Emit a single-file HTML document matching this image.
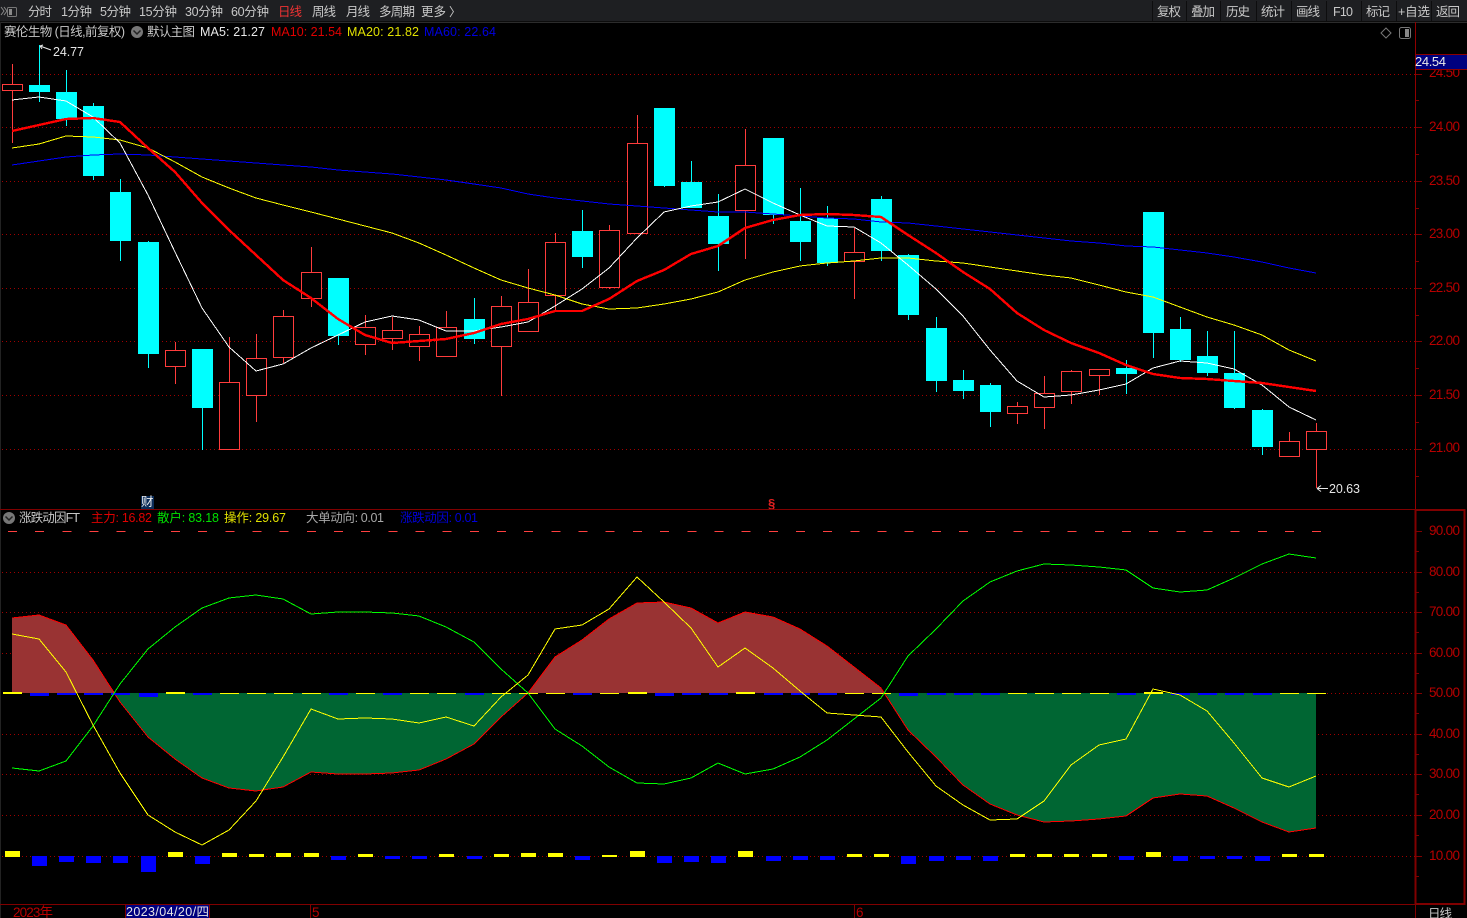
<!DOCTYPE html>
<html lang="zh">
<head>
<meta charset="utf-8">
<title>赛伦生物</title>
<style>
html,body{margin:0;padding:0;background:#000;width:1467px;height:918px;overflow:hidden}
svg{display:block;position:absolute;left:0;top:0}
text{font-family:"Liberation Sans","Noto Sans CJK SC",sans-serif;font-size:12.5px}
.t{fill:#c8c8c8}
.ax{fill:#b80000;font-size:13.5px}
.l{fill:none;stroke-width:1;shape-rendering:crispEdges}
.g{stroke:#a00000;stroke-width:1;stroke-dasharray:1 3;fill:none;shape-rendering:crispEdges}
.c{shape-rendering:crispEdges}
</style>
</head>
<body>
<svg width="1467" height="918" viewBox="0 0 1467 918" xmlns="http://www.w3.org/2000/svg">
<rect width="1467" height="918" fill="#000"/>
<!-- toolbar -->
<rect x="0" y="0" width="1467" height="21" fill="#1e1f22"/>
<rect x="0" y="21" width="1467" height="1" fill="#0c0c0c"/>
<rect x="0" y="22" width="1467" height="1" fill="#2c2c2c"/>
<rect x="0" y="22" width="1" height="896" fill="#222"/>
<g class="c" fill="#0d0d0e">
<rect x="1152" y="1" width="1" height="20"/><rect x="1186" y="1" width="1" height="20"/><rect x="1220" y="1" width="1" height="20"/><rect x="1256" y="1" width="1" height="20"/><rect x="1291" y="1" width="1" height="20"/><rect x="1326" y="1" width="1" height="20"/><rect x="1361" y="1" width="1" height="20"/><rect x="1396" y="1" width="1" height="20"/><rect x="1431" y="1" width="1" height="20"/>
</g>
<path d="M1 7l3 4-3 4M4 7l3 4-3 4" fill="none" stroke="#8a8a8a" stroke-width="1"/>
<rect x="7.5" y="7.5" width="9" height="9" rx="1" fill="none" stroke="#777"/>
<rect x="9" y="9" width="3" height="6" fill="#8a8a8a"/>
<g class="t">
<text x="28" y="16" textLength="24">分时</text>
<text x="61" y="16" textLength="31">1分钟</text>
<text x="100" y="16" textLength="31">5分钟</text>
<text x="139" y="16" textLength="38">15分钟</text>
<text x="185" y="16" textLength="38">30分钟</text>
<text x="231" y="16" textLength="38">60分钟</text>
<text x="278" y="16" textLength="24" style="fill:#f03333">日线</text>
<text x="312" y="16" textLength="24">周线</text>
<text x="346" y="16" textLength="24">月线</text>
<text x="379" y="16" textLength="36">多周期</text>
<text x="421" y="16" textLength="25">更多</text>
<text x="449" y="16" style="font-size:12px">〉</text>
<text x="1157" y="16" textLength="24">复权</text>
<text x="1191" y="16" textLength="24">叠加</text>
<text x="1226" y="16" textLength="24">历史</text>
<text x="1261" y="16" textLength="24">统计</text>
<text x="1296" y="16" textLength="24">画线</text>
<text x="1333" y="16" textLength="20">F10</text>
<text x="1366" y="16" textLength="24">标记</text>
<text x="1398" y="16" textLength="32">+自选</text>
<text x="1436" y="16" textLength="24">返回</text>
</g>

<!-- pane 1 grid -->
<g class="g">
<path d="M2 74.5H1415M2 127.5H1415M2 181.5H1415M2 234.5H1415M2 288.5H1415M2 341.5H1415M2 395.5H1415M2 449.5H1415"/>
</g>

<!-- candles -->
<path class="c" fill="none" stroke="#00ffff" d="M39.5 45V102M66.5 70V126M93.5 103V180M120.5 179V261M148.5 241V368M202.5 349V450M338.5 278V345M474.5 298V344M582.5 210V268M664.5 108V187M691.5 161V208M718.5 194V271M773.5 138V224M800.5 188V261M827.5 206V266M881.5 196V261M908.5 254V320M936.5 317V392M963.5 370V399M990.5 383V427M1126.5 360V394M1153.5 212V358M1180.5 317V362M1207.5 331V376M1234.5 331V409M1262.5 409V455"/>
<path class="c" fill="#00ffff" d="M29 85h21v7h-21zM56 92h21v27h-21zM83 106h21v70h-21zM110 192h21v49h-21zM138 242h21v112h-21zM192 349h21v59h-21zM328 278h21v58h-21zM464 319h21v20h-21zM572 231h21v26h-21zM654 108h21v78h-21zM681 182h21v26h-21zM708 216h21v28h-21zM763 138h21v77h-21zM790 221h21v21h-21zM817 218h21v45h-21zM871 199h21v52h-21zM898 255h21v60h-21zM926 328h21v53h-21zM953 380h21v11h-21zM980 385h21v27h-21zM1116 368h21v6h-21zM1143 212h21v121h-21zM1170 329h21v31h-21zM1197 356h21v17h-21zM1224 373h21v35h-21zM1252 410h21v37h-21z"/>
<path class="c" fill="none" stroke="#ff3c3c" d="M12.5 64V143M175.5 342V384M229.5 337V450M256.5 334V422M283.5 310V363M311.5 247V307M365.5 315V355M392.5 317V350M419.5 326V361M446.5 311V357M501.5 296V396M528.5 269V332M555.5 233V310M609.5 225V289M637.5 115V233M745.5 129V259M854.5 228V299M1017.5 402V424M1044.5 376V429M1071.5 370V404M1099.5 369V395M1289.5 432V457M1316.5 423V488"/>
<path class="c" fill="#000" stroke="#ff3c3c" d="M2.5 84.5h20v6h-20zM165.5 350.5h20v16h-20zM219.5 382.5h20v67h-20zM246.5 358.5h20v37h-20zM273.5 316.5h20v41h-20zM301.5 272.5h20v26h-20zM355.5 327.5h20v17h-20zM382.5 330.5h20v8h-20zM409.5 334.5h20v12h-20zM436.5 327.5h20v29h-20zM491.5 306.5h20v40h-20zM518.5 302.5h20v29h-20zM545.5 242.5h20v53h-20zM599.5 230.5h20v57h-20zM627.5 143.5h20v90h-20zM735.5 165.5h20v45h-20zM844.5 252.5h20v9h-20zM1007.5 406.5h20v7h-20zM1034.5 393.5h20v14h-20zM1061.5 371.5h20v20h-20zM1089.5 369.5h20v6h-20zM1279.5 441.5h20v15h-20zM1306.5 431.5h20v18h-20z"/>

<!-- MA lines -->
<polyline class="l" stroke="#0000ff" points="12,165 39,161 66,157 93,155 120,154 148,155 175,157 202,159 229,161 256,163 283,165 311,167 338,170 365,172 392,174 419,177 446,180 474,184 501,188 528,194 555,198 582,201 609,204 637,206 664,208 691,210 718,212 745,212 773,214 800,216 827,218 854,219 881,222 908,223 936,226 963,229 990,232 1017,235 1044,238 1071,241 1099,243 1126,246 1153,247 1180,250 1207,253 1234,257 1262,262 1289,268 1316,273"/>
<polyline class="l" stroke="#ffff00" points="12,148 39,144 66,136 93,137 120,140 148,148 175,162 202,177 229,188 256,198 283,205 311,212 338,219 365,226 392,233 419,243 446,255 474,268 501,280 528,288 555,295 582,304 609,309 637,308 664,304 691,299 718,292 745,280 773,272 800,266 827,263 854,261 881,258 908,258 936,261 963,263 990,267 1017,271 1044,275 1071,278 1099,285 1126,292 1153,297 1180,307 1207,317 1234,325 1262,335 1289,350 1316,361"/>
<polyline class="l" stroke="#ffffff" points="12,100 39,97 66,101 93,117 120,143 148,195 175,252 202,308 229,347 256,371 283,364 311,348 338,335 365,322 392,316 419,320 446,331 474,331 501,327 528,322 555,306 582,289 609,268 637,238 664,212 691,206 718,202 745,189 773,203 800,215 827,226 854,227 881,243 908,265 936,289 963,316 990,350 1017,381 1044,397 1071,395 1099,390 1126,384 1153,368 1180,361 1207,363 1234,369 1262,385 1289,407 1316,420"/>
<polyline fill="none" stroke="#ff0000" stroke-width="2.4" class="c" points="12,131 39,125 66,119 93,118 120,122 148,148 175,172 202,203 229,230 256,255 283,280 311,298 338,319 365,335 392,343 419,341 446,339 474,333 501,324 528,319 555,311 582,311 609,299 637,281 664,270 691,254 718,246 745,228 773,220 800,215 827,214 854,215 881,217 908,235 936,253 963,272 990,289 1017,313 1044,330 1071,343 1099,353 1126,365 1153,374 1180,378 1207,379 1234,381 1262,383 1289,387 1316,391"/>

<!-- high / low labels -->
<path d="M40 46l11 4M40 46l3-1M40 46l2 3" fill="none" stroke="#e8e8e8" stroke-width="1"/>
<text x="53" y="56" textLength="31" style="fill:#e6e6e6">24.77</text>
<path d="M1317 488.5h11M1317 488.5l4-3M1317 488.5l4 3" fill="none" stroke="#e8e8e8" stroke-width="1"/>
<text x="1329" y="493" textLength="31" style="fill:#e6e6e6">20.63</text>

<!-- header line -->
<text x="4" y="36" textLength="121" class="t">赛伦生物 (日线,前复权)</text>
<circle cx="137" cy="32" r="6" fill="#777"/>
<path d="M133.5 30.5l3.5 3.5 3.5-3.5" fill="none" stroke="#222" stroke-width="1.5"/>
<text x="147" y="36" textLength="48" class="t">默认主图</text>
<text x="200" y="36" textLength="65" style="fill:#e8e8e8">MA5: 21.27</text>
<text x="271" y="36" textLength="71" style="fill:#e00000">MA10: 21.54</text>
<text x="347" y="36" textLength="72" style="fill:#e0e000">MA20: 21.82</text>
<text x="424" y="36" textLength="72" style="fill:#0000e0">MA60: 22.64</text>
<path d="M1386 28l5 5-5 5-5-5z" fill="none" stroke="#777"/>
<rect x="1399.5" y="27.5" width="11" height="11" rx="2" fill="none" stroke="#777"/>
<rect x="1405" y="29" width="4" height="8" fill="#888"/>

<!-- markers -->
<rect x="141" y="496" width="13" height="13" fill="#0b2c58"/>
<text x="141" y="506" style="font-size:12.5px;fill:#eee">财</text>
<text x="768" y="508" style="font-size:13px;font-weight:bold;fill:#e02020">§</text>

<!-- pane separators -->
<rect x="0" y="509" width="1415" height="1" fill="#800000"/>
<rect x="0" y="904" width="1415" height="1" fill="#800000"/>
<rect x="1415" y="22" width="1" height="488" fill="#900000"/>
<rect x="1415.5" y="510" width="49" height="394" fill="none" stroke="#800000" stroke-width="2"/>
<rect x="1415" y="904" width="1" height="14" fill="#800000"/>

<!-- right axis pane 1 -->
<path class="c" fill="none" stroke="#800000" d="M1416 74.5h6M1416 127.5h6M1416 181.5h6M1416 234.5h6M1416 288.5h6M1416 341.5h6M1416 395.5h6M1416 449.5h6M1416 100.5h3M1416 154.5h3M1416 208.5h3M1416 261.5h3M1416 315.5h3M1416 368.5h3M1416 422.5h3M1416 476.5h3"/>
<text class="ax" x="1429" y="77" textLength="31">24.50</text>
<text class="ax" x="1429" y="131" textLength="31">24.00</text>
<text class="ax" x="1429" y="185" textLength="31">23.50</text>
<text class="ax" x="1429" y="238" textLength="31">23.00</text>
<text class="ax" x="1429" y="292" textLength="31">22.50</text>
<text class="ax" x="1429" y="345" textLength="31">22.00</text>
<text class="ax" x="1429" y="399" textLength="31">21.50</text>
<text class="ax" x="1429" y="452" textLength="31">21.00</text>
<rect x="1415.5" y="54.5" width="52" height="15" fill="#00007f" stroke="#8c0000"/>
<text x="1415" y="66" textLength="31" style="font-size:13px;fill:#eaeaea">24.54</text>

<!-- pane 2 header -->
<circle cx="9" cy="518" r="6" fill="#777"/>
<path d="M5.5 516.5l3.5 3.5 3.5-3.5" fill="none" stroke="#222" stroke-width="1.5"/>
<text x="19" y="522" textLength="61" class="t">涨跌动因FT</text>
<text x="91" y="522" textLength="61" style="fill:#e00000">主力: 16.82</text>
<text x="157" y="522" textLength="62" style="fill:#00e000">散户: 83.18</text>
<text x="224" y="522" textLength="62" style="fill:#e0e000">操作: 29.67</text>
<text x="306" y="522" textLength="78" style="fill:#a8a8a8">大单动向: 0.01</text>
<text x="400" y="522" textLength="78" style="fill:#0000d8">涨跌动因: 0.01</text>

<!-- pane 2 grid -->
<path class="c" fill="none" stroke="#ff4040" stroke-dasharray="9 18.17" d="M8 531.5H1325"/>
<path class="g" d="M2 572.5H1415M2 612.5H1415M2 653.5H1415M1327 693.5H1415M2 734.5H1415M2 774.5H1415M2 815.5H1415M2 856.5H1415"/>

<!-- areas -->
<polygon class="c" fill="#993333" points="12,693 12,618 39,615 66,625 93,660 115,693"/>
<polygon class="c" fill="#006633" points="115,693 120,702 148,737 175,759 202,778 229,788 256,791 283,787 311,772 338,774 365,774 392,773 419,770 446,759 474,744 501,717 528,693"/>
<polygon class="c" fill="#993333" points="528,693 555,657 582,640 609,619 637,603 664,602 691,608 718,623 745,612 773,617 800,629 827,646 854,667 881,688 885,693"/>
<polygon class="c" fill="#006633" points="885,693 908,730 936,757 963,785 990,804 1017,815 1044,822 1071,821 1099,819 1126,816 1153,798 1180,794 1207,796 1234,808 1262,822 1289,832 1316,828 1316,693"/>

<!-- pane 2 lines -->
<polyline class="l" stroke="#ff0000" points="12,618 39,615 66,625 93,660 120,702 148,737 175,759 202,778 229,788 256,791 283,787 311,772 338,774 365,774 392,773 419,770 446,759 474,744 501,717 528,693 555,657 582,640 609,619 637,603 664,602 691,608 718,623 745,612 773,617 800,629 827,646 854,667 881,688 908,730 936,757 963,785 990,804 1017,815 1044,822 1071,821 1099,819 1126,816 1153,798 1180,794 1207,796 1234,808 1262,822 1289,832 1316,828"/>
<rect x="12" y="618" width="1" height="75" fill="#993333"/>

<!-- zero-line dashes -->
<g class="c" fill="#ffff00">
<rect x="3" y="692" width="19" height="2"/><rect x="166" y="692" width="19" height="2"/><rect x="220" y="693" width="19" height="1"/><rect x="247" y="693" width="19" height="1"/><rect x="274" y="693" width="19" height="1"/><rect x="302" y="693" width="19" height="1"/><rect x="356" y="693" width="19" height="1"/><rect x="410" y="693" width="19" height="1"/><rect x="437" y="693" width="19" height="1"/>
<rect x="492" y="693" width="19" height="1"/><rect x="546" y="693" width="19" height="1"/><rect x="600" y="693" width="19" height="1"/><rect x="628" y="692" width="19" height="2"/><rect x="736" y="692" width="19" height="2"/><rect x="845" y="693" width="19" height="1"/><rect x="1008" y="693" width="19" height="1"/><rect x="1035" y="693" width="19" height="1"/><rect x="1062" y="693" width="19" height="1"/><rect x="1090" y="693" width="19" height="1"/><rect x="1144" y="692" width="19" height="2"/><rect x="1280" y="693" width="19" height="1"/><rect x="1307" y="693" width="19" height="1"/>
<rect x="519" y="693" width="19" height="1"/><rect x="872" y="693" width="19" height="1"/>
</g>
<g class="c" fill="#0000ff">
<rect x="30" y="693" width="19" height="3"/><rect x="57" y="693" width="19" height="2"/><rect x="84" y="693" width="19" height="2"/><rect x="111" y="693" width="19" height="2"/><rect x="139" y="693" width="19" height="4"/><rect x="193" y="693" width="19" height="2"/><rect x="329" y="693" width="19" height="2"/><rect x="383" y="693" width="19" height="2"/>
<rect x="465" y="693" width="19" height="2"/><rect x="573" y="693" width="19" height="2"/><rect x="655" y="693" width="19" height="3"/><rect x="682" y="693" width="19" height="2"/><rect x="709" y="693" width="19" height="2"/><rect x="764" y="693" width="19" height="2"/><rect x="791" y="693" width="19" height="2"/><rect x="818" y="693" width="19" height="2"/><rect x="899" y="693" width="19" height="3"/><rect x="927" y="693" width="19" height="2"/><rect x="954" y="693" width="19" height="2"/><rect x="981" y="693" width="19" height="2"/><rect x="1117" y="693" width="19" height="2"/><rect x="1171" y="693" width="19" height="2"/><rect x="1198" y="693" width="19" height="2"/><rect x="1225" y="693" width="19" height="2"/><rect x="1253" y="693" width="19" height="2"/>
</g>

<polyline class="l" stroke="#00ff00" points="12,768 39,771 66,761 93,726 120,684 148,649 175,627 202,608 229,598 256,595 283,599 311,614 338,612 365,612 392,613 419,616 446,627 474,642 501,669 528,693 555,729 582,746 609,767 637,783 664,784 691,778 718,763 745,774 773,769 800,757 827,740 854,719 881,698 908,656 936,629 963,601 990,582 1017,571 1044,564 1071,565 1099,567 1126,570 1153,588 1180,592 1207,590 1234,578 1262,564 1289,554 1316,558"/>
<polyline class="l" stroke="#ffff00" points="12,634 39,639 66,672 93,725 120,773 148,815 175,832 202,845 229,830 256,801 283,757 311,709 338,719 365,718 392,719 419,723 446,717 474,726 501,697 528,675 555,629 582,625 609,609 637,577 664,602 691,628 718,667 745,648 773,668 800,691 827,713 854,715 881,717 908,752 936,786 963,805 990,820 1017,819 1044,801 1071,765 1099,745 1126,739 1153,689 1180,695 1207,711 1234,743 1262,778 1289,787 1316,776"/>

<!-- bottom bars -->
<g class="c" fill="#ffff00">
<rect x="5" y="851" width="15" height="6"/><rect x="168" y="852" width="15" height="5"/><rect x="222" y="853" width="15" height="4"/><rect x="249" y="854" width="15" height="3"/><rect x="276" y="853" width="15" height="4"/><rect x="304" y="853" width="15" height="4"/><rect x="358" y="854" width="15" height="3"/><rect x="439" y="854" width="15" height="3"/><rect x="494" y="854" width="15" height="3"/><rect x="521" y="853" width="15" height="4"/><rect x="548" y="853" width="15" height="4"/><rect x="602" y="855" width="15" height="2"/><rect x="630" y="851" width="15" height="6"/><rect x="738" y="851" width="15" height="6"/><rect x="847" y="854" width="15" height="3"/><rect x="874" y="854" width="15" height="3"/><rect x="1010" y="854" width="15" height="3"/><rect x="1037" y="854" width="15" height="3"/><rect x="1064" y="854" width="15" height="3"/><rect x="1092" y="854" width="15" height="3"/><rect x="1146" y="852" width="15" height="5"/><rect x="1282" y="854" width="15" height="3"/><rect x="1309" y="854" width="15" height="3"/>
</g>
<g class="c" fill="#0000ff">
<rect x="32" y="856" width="15" height="10"/><rect x="59" y="856" width="15" height="6"/><rect x="86" y="856" width="15" height="7"/><rect x="113" y="856" width="15" height="7"/><rect x="141" y="856" width="15" height="16"/><rect x="195" y="856" width="15" height="8"/><rect x="331" y="856" width="15" height="4"/><rect x="385" y="856" width="15" height="3"/><rect x="412" y="856" width="15" height="3"/><rect x="467" y="856" width="15" height="3"/><rect x="575" y="856" width="15" height="4"/><rect x="657" y="856" width="15" height="7"/><rect x="684" y="856" width="15" height="6"/><rect x="711" y="856" width="15" height="7"/><rect x="766" y="856" width="15" height="5"/><rect x="793" y="856" width="15" height="4"/><rect x="820" y="856" width="15" height="4"/><rect x="901" y="856" width="15" height="8"/><rect x="929" y="856" width="15" height="5"/><rect x="956" y="856" width="15" height="4"/><rect x="983" y="856" width="15" height="5"/><rect x="1119" y="856" width="15" height="4"/><rect x="1173" y="856" width="15" height="5"/><rect x="1200" y="856" width="15" height="3"/><rect x="1227" y="856" width="15" height="3"/><rect x="1255" y="856" width="15" height="5"/>
</g>

<!-- right axis pane 2 -->
<path class="c" fill="none" stroke="#800000" d="M1416 531.5h6M1416 572.5h6M1416 612.5h6M1416 653.5h6M1416 693.5h6M1416 734.5h6M1416 774.5h6M1416 815.5h6M1416 856.5h6M1416 551.5h3M1416 592.5h3M1416 632.5h3M1416 673.5h3M1416 713.5h3M1416 754.5h3M1416 794.5h3M1416 835.5h3M1416 876.5h3"/>
<text class="ax" x="1429" y="535" textLength="31">90.00</text>
<text class="ax" x="1429" y="576" textLength="31">80.00</text>
<text class="ax" x="1429" y="616" textLength="31">70.00</text>
<text class="ax" x="1429" y="657" textLength="31">60.00</text>
<text class="ax" x="1429" y="697" textLength="31">50.00</text>
<text class="ax" x="1429" y="738" textLength="31">40.00</text>
<text class="ax" x="1429" y="778" textLength="31">30.00</text>
<text class="ax" x="1429" y="819" textLength="31">20.00</text>
<text class="ax" x="1429" y="860" textLength="31">10.00</text>

<!-- time axis -->
<text class="ax" x="13" y="917" textLength="40">2023年</text>
<rect x="125.5" y="904.5" width="84" height="14" fill="#00007f" stroke="#800000"/>
<text x="126" y="916" textLength="83" style="font-size:12.5px;fill:#e4e4e4">2023/04/20/四</text>
<rect x="310" y="905" width="1" height="13" fill="#800000"/>
<text class="ax" x="312" y="917">5</text>
<rect x="854" y="905" width="1" height="13" fill="#800000"/>
<text class="ax" x="856" y="917">6</text>
<text x="1428" y="918" textLength="24" style="font-size:12.5px;fill:#c8c8c8">日线</text>
</svg>
</body>
</html>
